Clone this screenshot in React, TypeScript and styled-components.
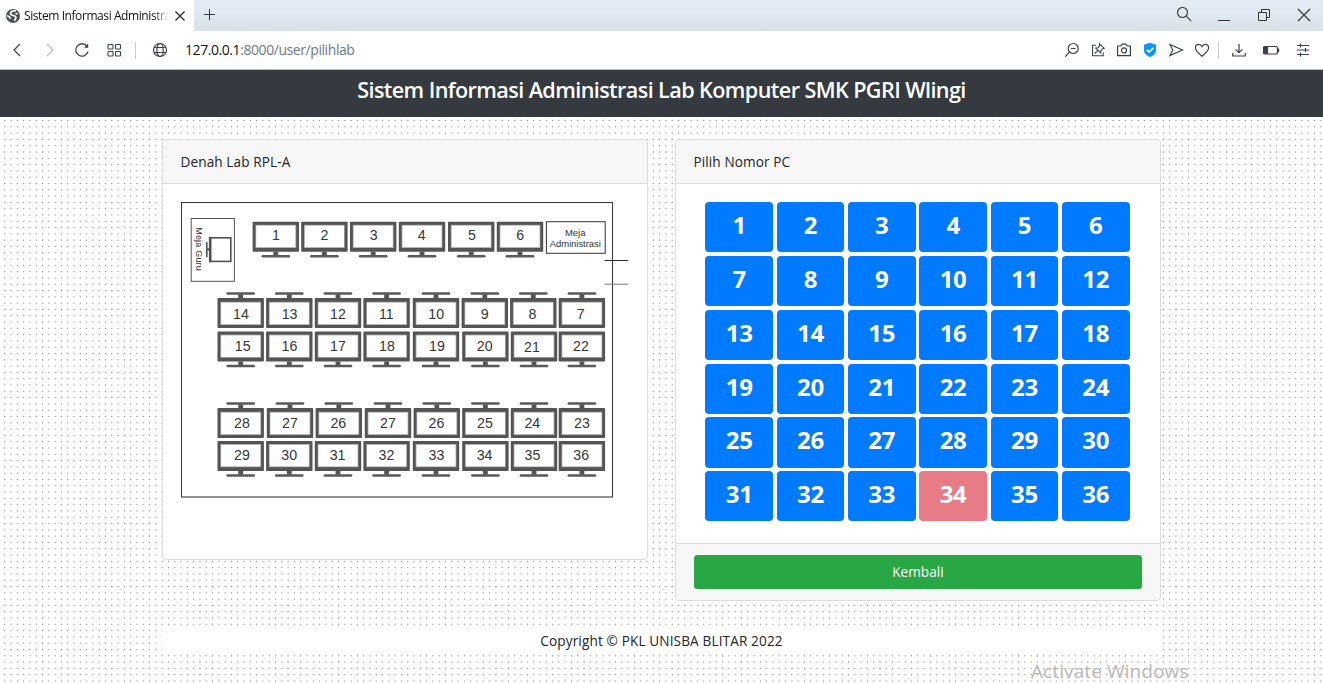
import React from "react";
import styled, { createGlobalStyle } from "styled-components";

const Global = createGlobalStyle`
  * { box-sizing: border-box; }
  html, body { margin: 0; padding: 0; overflow: hidden; background: #fff; }
  body { font-family: "Open Sans", "Noto Sans", sans-serif; color: #212529; }
`;

const Screen = styled.div`
  position: relative;
  width: 1323px;
  height: 683px;
  display: flex;
  flex-direction: column;
  overflow: hidden;
`;

const TabStrip = styled.div`
  height: 31px;
  display: flex;
  align-items: flex-start;
  background: linear-gradient(#e4ecf5 0%, #e0e8f1 45%, #d8e0e8 100%);
`;

const Tab = styled.div`
  width: 194px;
  height: 31px;
  padding-left: 6px;
  display: flex;
  align-items: center;
  background: #fff;
`;

const TabTitle = styled.div`
  width: 145px;
  margin-left: 4px;
  overflow: hidden;
  white-space: nowrap;
  font-size: 12px;
  line-height: 18px;
  letter-spacing: -0.42px;
  color: #111;
  mask-image: linear-gradient(to right, #000 130px, transparent 145px);
`;

const TabClose = styled.div`
  display: flex;
  margin-left: 5px;
`;

const NewTab = styled.div`
  display: flex;
  padding: 8px 0 0 9px;
  flex: 1;
`;

const WindowControls = styled.div`
  display: flex;
  height: 30px;
`;

const Slot = styled.div<{ $w: number }>`
  width: ${(p) => p.$w}px;
  height: 100%;
  display: flex;
  align-items: center;
  justify-content: center;
`;

const AddressBar = styled.div`
  height: 39px;
  display: flex;
  align-items: center;
  background: #fff;
  border-bottom: 1px solid #b4bcc3;
  padding-left: 1px;
`;

const Divider = styled.div<{ $m: string }>`
  width: 1px;
  height: 17px;
  background: #c8cbce;
  margin: ${(p) => p.$m};
`;

const Url = styled.div`
  flex: 1;
  margin-left: 17px;
  font-size: 14px;
  line-height: 20px;
  letter-spacing: -0.43px;
  color: #6d7b88;
  b { font-weight: 400; color: #111; }
`;

const Banner = styled.header`
  height: 47px;
  background: #343a40;
  color: #fff;
  display: flex;
  justify-content: center;
  h1 {
    margin: 0;
    font-size: 21.6px;
    font-weight: 600;
    line-height: 40px;
    letter-spacing: -0.59px;
    white-space: nowrap;
  }
`;

const Page = styled.main`
  flex: 1;
  background-color: #fff;
  background-image: radial-gradient(circle at 50% 50%, #8c8c8c 0.2px, rgba(150, 150, 150, 0) 1.05px);
  background-size: 6.3px 6.3px;
  background-position: 1.6px 0.4px;
  padding: 22px 162px 0;
`;

const Columns = styled.div`
  display: flex;
  align-items: flex-start;
  justify-content: space-between;
  height: 490px;
`;

const Card = styled.section<{ $h: number }>`
  width: 486px;
  height: ${(p) => p.$h}px;
  display: flex;
  flex-direction: column;
  background: #fff;
  border: 1px solid #dcdcdc;
  border-radius: 4px;
  overflow: hidden;
`;

const CardHeader = styled.div`
  height: 44px;
  padding: 0 17.5px;
  line-height: 44px;
  background: #f7f7f7;
  border-bottom: 1px solid #dcdcdc;
  font-size: 13.6px;
  letter-spacing: 0.1px;
`;

const PlanBody = styled.div`
  padding: 18px;
  svg { display: block; }
`;

const PcGrid = styled.div`
  flex: 1;
  display: grid;
  grid-template-columns: repeat(6, 67.7px);
  grid-auto-rows: 50.2px;
  gap: 3.6px 3.65px;
  padding: 18.2px 0 0 29.3px;
`;

const PcButton = styled.button<{ $taken: boolean }>`
  border: 0;
  padding: 0 0 4px;
  border-radius: 4px;
  background: ${(p) => (p.$taken ? "#e77c87" : "#007bff")};
  color: #fff;
  font-family: inherit;
  font-size: 24px;
  font-weight: 700;
  line-height: 44px;
  letter-spacing: -0.3px;
`;

const CardFooter = styled.div`
  height: 57px;
  padding: 11px 18px;
  background: #f7f7f7;
  border-top: 1px solid #dcdcdc;
`;

const BackButton = styled.button`
  display: block;
  width: 100%;
  height: 34px;
  border: 0;
  padding: 0 0 1px;
  border-radius: 3.5px;
  background: #28a745;
  color: #fff;
  font-family: inherit;
  font-size: 13.6px;
  letter-spacing: 0.05px;
`;

const Copyright = styled.footer`
  height: 23px;
  line-height: 24px;
  background: #fff;
  text-align: center;
  font-size: 13.6px;
  letter-spacing: 0.13px;
`;

const Watermark = styled.div`
  position: absolute;
  left: 1031px;
  top: 658px;
  font-size: 19px;
  line-height: 27px;
  letter-spacing: 0.1px;
  color: #b9b9b9;
  white-space: nowrap;
`;

type IconProps = { w?: number; h?: number; color?: string; sw?: number; children: React.ReactNode };
const Icon = ({ w = 16, h = 16, color = "#3b4249", sw = 1.2, children }: IconProps) => (
  <svg width={w} height={h} viewBox={`0 0 ${w} ${h}`} fill="none" stroke={color} strokeWidth={sw}>
    {children}
  </svg>
);

type Desk = { n: number; c: number; t: number; dy: number };
type DeskRow = { top: number; base: number; flip: boolean; desks: Desk[] };

const row = (top: number, base: number, flip: boolean, n: number[], c: number[], t: number[]): DeskRow => ({
  top,
  base,
  flip,
  desks: n.map((v, i) => ({ n: v, c: c[i], t: t[i], dy: v === 21 ? 0.8 : 0 })),
});

const deskRows: DeskRow[] = [
  row(222, 240.4, false, [1, 2, 3, 4, 5, 6], [275.8, 324.4, 373.2, 422, 471.2, 520], [276, 324.5, 373.7, 421.6, 472, 520.3]),
  row(298, 319.2, true, [14, 13, 12, 11, 10, 9, 8, 7], [240.7, 289.3, 338, 386.6, 436, 484.8, 533.3, 581.9], [241, 289.6, 338, 386.4, 436.2, 484.6, 532.4, 580.8]),
  row(331.8, 351.2, false, [15, 16, 17, 18, 19, 20, 21, 22], [240.7, 289.3, 338, 386.6, 436, 485.4, 534, 581.9], [242.7, 289.5, 338, 387, 437, 484.7, 532, 581]),
  row(408, 428.4, true, [28, 27, 26, 27, 26, 25, 24, 23], [240.7, 290, 338.8, 388, 436.8, 485.4, 534, 581.9], [242, 290, 338.3, 388, 436.5, 485, 532.3, 582]),
  row(441.2, 460.2, false, [29, 30, 31, 32, 33, 34, 35, 36], [240.7, 289.3, 338, 386.6, 436, 485.4, 534, 581.9], [242, 289.2, 337.6, 386.5, 436.5, 484.6, 532.4, 581.2]),
];

const Monitor = ({ c, top, flip }: { c: number; top: number; flip: boolean }) => (
  <g transform={flip ? `translate(${c} ${top + 29.8}) scale(1 -1)` : `translate(${c} ${top})`}>
    <rect x={-23.2} y={-0.2} width={46.4} height={30} rx={0.8} fill="#545454" />
    <rect x={-20.4} y={2.8} width={40.8} height={23.2} fill="#a6a6a6" />
    <rect x={-19.6} y={3.6} width={39.2} height={21.6} fill="#fff" />
    <rect x={-2.4} y={29.6} width={4.8} height={4} fill="#545454" />
    <rect x={-14.3} y={33} width={28.6} height={2.5} rx={1.2} fill="#595959" />
  </g>
);

const FloorPlan = () => (
  <svg width="448" height="296" viewBox="181 202 448 296" fontFamily='"Liberation Sans", Arial, sans-serif' fill="#363636">
    <rect x="181.5" y="202.5" width="431" height="294.5" fill="#fff" stroke="#3c3c3c" strokeWidth="1.1" />
    <rect x="191.2" y="218.5" width="43.2" height="62.8" fill="none" stroke="#555" />
    <rect x="210" y="237.8" width="20.8" height="23.6" fill="#fff" stroke="#505050" strokeWidth="1.6" />
    <path d="M210.2 237v25.2" stroke="#505050" strokeWidth="2.6" />
    <path d="M206.8 242v15.2" stroke="#555" strokeWidth="1.6" />
    <path d="M206.8 249.4h3" stroke="#555" strokeWidth="2.4" />
    <text transform="translate(196.4 227.2) rotate(90)" fontSize="9" textLength="43.6">Meja Guru</text>
    <rect x="546.4" y="221.7" width="58.8" height="31.6" fill="none" stroke="#333" />
    <text x="575.2" y="235.8" fontSize="9.5" textAnchor="middle">Meja</text>
    <text x="575.3" y="246.6" fontSize="9.5" textAnchor="middle" textLength="51">Administrasi</text>
    <path d="M604.5 260.5h23.5" stroke="#2b2b2b" />
    <path d="M604.5 284.2h23.5" stroke="#777" />
    {deskRows.map((r) => (
      <g key={r.top}>
        {r.desks.map((d) => (
          <g key={d.c}>
            <Monitor c={d.c} top={r.top} flip={r.flip} />
            <text x={d.t} y={r.base + d.dy} fontSize="14.2" textAnchor="middle">{d.n}</text>
          </g>
        ))}
      </g>
    ))}
  </svg>
);

const pcs = Array.from({ length: 36 }, (_, i) => i + 1);

export default function App() {
  return (
    <Screen>
      <Global />
      <TabStrip>
        <Tab>
          <Icon w={14} h={14} color="none">
            <circle cx="7" cy="7" r="7" fill="#4d5156" />
            <path d="M9.800 1.900C7 1.300 4.300 2.600 4.500 4.700c.2 2 3 1.500 4.600 2.500 1.500 1 .6 3-.9 4.300" stroke="#fff" strokeWidth="1.700" />
            <path d="M1 6.800c1.800.2 3.200 1.200 3.300 3.200M9.500 4.500l2.300.3" stroke="#fff" strokeWidth="1.500" />
          </Icon>
          <TabTitle>Sistem Informasi Administrasi</TabTitle>
          <TabClose>
            <Icon w={12} h={12} color="#22262a"><path d="M1.500 1.500l9 9M10.500 1.500l-9 9" /></Icon>
          </TabClose>
        </Tab>
        <NewTab>
          <Icon w={13} h={13} color="#33383d" sw={1}><path d="M6.500 1v11M1 6.500h11" /></Icon>
        </NewTab>
        <WindowControls>
          <Slot $w={40}>
            <Icon color="#444"><circle cx="6.500" cy="5.500" r="5" /><path d="M10.200 9.200l5 5" /></Icon>
          </Slot>
          <Slot $w={40}><Icon color="#333" sw={1}><path d="M2 13.500h12" /></Icon></Slot>
          <Slot $w={40}>
            <Icon color="#333" sw={1}><path d="M2.500 5.500h8v8h-8zM5.500 5.500v-3h8v8h-3" /></Icon>
          </Slot>
          <Slot $w={39}><Icon color="#333" sw={1.1}><path d="M2 2l12 12M14 2L2 14" /></Icon></Slot>
        </WindowControls>
      </TabStrip>

      <AddressBar>
        <Slot $w={32}><Icon><path d="M11 2L5 8l6 6" /></Icon></Slot>
        <Slot $w={33}><Icon color="#b9bdc1"><path d="M5 2l6 6-6 6" /></Icon></Slot>
        <Slot $w={32}>
          <Icon sw={1.3}><path d="M14 9.500A6.200 6.200 0 1 1 12.800 4" /><path d="M14.200 1.500v4.200H10z" fill="#3b4249" stroke="none" /></Icon>
        </Slot>
        <Slot $w={31}>
          <Icon sw={1.1}>
            <rect x="2" y="2.500" width="5" height="4.500" rx=".8" /><rect x="9.500" y="2.500" width="5" height="4.500" rx=".8" />
            <rect x="2" y="9.500" width="5" height="4.500" rx=".8" /><rect x="9.500" y="9.500" width="5" height="4.500" rx=".8" />
          </Icon>
        </Slot>
        <Divider $m="0 16px 0 6px" />
        <Icon>
          <circle cx="8" cy="8" r="6.500" /><ellipse cx="8" cy="8" rx="3.200" ry="6.500" />
          <path d="M2.300 5.500h11.400M2.300 10.500h11.400" />
        </Icon>
        <Url><b>127.0.0.1</b>:8000/user/pilihlab</Url>
        <Slot $w={26}>
          <Icon><circle cx="9.200" cy="6.500" r="5" /><path d="M6.800 6.500h4.800M5.500 10.200L1.300 14.600" /></Icon>
        </Slot>
        <Slot $w={26}>
          <Icon sw={1.1}>
            <path d="M6 3.200H2.600v10.600h10.600v-3.300" />
            <path d="M9.600 1.800l4.600 4.400-1.700.5-1.600 2-.3 2.200-4.900-4.800 2.300-.4 1.700-1.900zM7.600 8.600l-2.900 2.900" />
          </Icon>
        </Slot>
        <Slot $w={26}>
          <Icon><path d="M1.600 4h3.200l1.300-1.900h3.800L11.200 4h3.200v9.600H1.600z" /><circle cx="8" cy="8.400" r="2.500" /></Icon>
        </Slot>
        <Slot $w={26}>
          <Icon color="none">
            <path d="M8 .8l6 2v5.200c0 3.600-2.400 5.700-6 7-3.600-1.300-6-3.400-6-7V2.800z" fill="#0a96ff" />
            <path d="M4.800 7.600l2.400 2.400 4.200-4.200" stroke="#fff" strokeWidth="1.600" />
          </Icon>
        </Slot>
        <Slot $w={26}><Icon><path d="M2 2.500l12.500 5.500L2 13.500l2.800-5.500z" /></Icon></Slot>
        <Slot $w={26}>
          <Icon><path d="M8 14.200C4.500 11.500 1.400 9 1.400 5.800c0-4 5-4.600 6.600-1.200 1.600-3.400 6.600-2.800 6.600 1.200 0 3.200-3.100 5.700-6.600 8.400z" /></Icon>
        </Slot>
        <Divider $m="0 3px" />
        <Slot $w={33}>
          <Icon><path d="M8 2v8.500M4.600 7.300L8 10.700l3.400-3.400M1.800 11v3h12.400v-3" /></Icon>
        </Slot>
        <Slot $w={32}>
          <Icon w={18}><rect x="1.600" y="4.500" width="13.800" height="7.500" rx="1.200" /><path d="M2 5h3.500v6.500H2zM16.600 6.500v3.500" fill="#3b4249" /></Icon>
        </Slot>
        <Slot $w={32}>
          <Icon><path d="M2 3.500h12M2 8h12M2 12.500h12M5.500 1.500v4M10.500 6v4M5.500 10.500v4" /></Icon>
        </Slot>
        <Slot $w={4} />
      </AddressBar>

      <Banner><h1>Sistem Informasi Administrasi Lab Komputer SMK PGRI Wlingi</h1></Banner>

      <Page>
        <Columns>
          <Card $h={421}>
            <CardHeader>Denah Lab RPL-A</CardHeader>
            <PlanBody><FloorPlan /></PlanBody>
          </Card>
          <Card $h={462}>
            <CardHeader>Pilih Nomor PC</CardHeader>
            <PcGrid>
              {pcs.map((n) => (
                <PcButton key={n} $taken={n === 34}>{n}</PcButton>
              ))}
            </PcGrid>
            <CardFooter><BackButton>Kembali</BackButton></CardFooter>
          </Card>
        </Columns>
        <Copyright>Copyright © PKL UNISBA BLITAR 2022</Copyright>
      </Page>
      <Watermark>Activate Windows</Watermark>
    </Screen>
  );
}
